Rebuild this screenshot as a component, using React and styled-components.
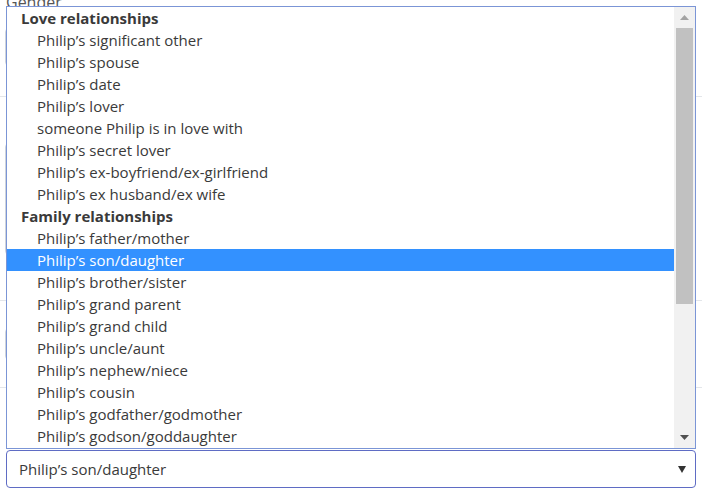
import React from "react";
import styled, { createGlobalStyle } from "styled-components";

const Global = createGlobalStyle`
  html, body { margin: 0; padding: 0; background: #fff; }
  body { font-family: "Open Sans", "Noto Sans", sans-serif; color: #333; }
`;

const Page = styled.div`
  position: relative;
  width: 702px;
  height: 493px;
  overflow: hidden;
  background: #fff;
`;

const Form = styled.div`
  display: flex;
  flex-direction: column;
  height: 100%;
  box-sizing: border-box;
`;

const Label = styled.div`
  font-size: 16px;
  line-height: 16px;
  color: #555;
  margin: -6px 0 0 6px;
  height: 12px;
`;

const Behind = styled.div`
  flex: 1;
  display: flex;
  flex-direction: column;
`;

const Field = styled.div`
  height: ${(p) => p.h}px;
  box-sizing: border-box;
  border-bottom: ${(p) => (p.rule ? "1px solid #e3e6ea" : "none")};
  display: flex;
  align-items: ${(p) => p.align || "center"};
  padding-left: 5px;
`;

const Ghost = styled.div`
  width: 40px;
  height: ${(p) => p.h}px;
  border: 1px solid #cfd4da;
  border-radius: 4px;
  margin-top: ${(p) => p.mt || 0}px;
`;

const Select = styled.div`
  margin: 0 6px 5px 6px;
  height: 38px;
  box-sizing: border-box;
  border: 1px solid #5f6cc4;
  border-radius: 4px;
  display: flex;
  align-items: center;
  justify-content: space-between;
  padding: 0 9px 0 12px;
  font-size: 15px;
  color: #3a3a3a;
`;

const Caret = styled.svg`
  width: 8px;
  height: 7px;
  display: block;
`;

const Popup = styled.div`
  position: absolute;
  left: 6px;
  top: 6px;
  width: 690px;
  height: 443px;
  box-sizing: border-box;
  border: 1px solid #7b95d6;
  background: #fff;
  display: flex;
`;

const List = styled.div`
  flex: 1;
  overflow: hidden;
  display: flex;
  flex-direction: column;
`;

const Row = styled.div`
  height: 22px;
  line-height: 23px;
  font-size: 15px;
  white-space: nowrap;
  padding-left: ${(p) => (p.group ? 14 : 30)}px;
  font-weight: ${(p) => (p.group ? 700 : 400)};
  color: ${(p) => (p.selected ? "#fff" : "#3a3a3a")};
  background: ${(p) => (p.selected ? "#3391ff" : "transparent")};
`;

const Scrollbar = styled.div`
  width: 21px;
  background: #f1f1f1;
  display: flex;
  flex-direction: column;
`;

const ArrowButton = styled.div`
  height: 21px;
  display: flex;
  align-items: center;
  justify-content: center;
`;

const Track = styled.div`
  flex: 1;
  padding: 0 2px;
`;

const Thumb = styled.div`
  height: 276px;
  background: #c1c1c1;
`;

const groups = [
  {
    label: "Love relationships",
    items: [
      "Philip’s significant other",
      "Philip’s spouse",
      "Philip’s date",
      "Philip’s lover",
      "someone Philip is in love with",
      "Philip’s secret lover",
      "Philip’s ex-boyfriend/ex-girlfriend",
      "Philip’s ex husband/ex wife",
    ],
  },
  {
    label: "Family relationships",
    items: [
      "Philip’s father/mother",
      "Philip’s son/daughter",
      "Philip’s brother/sister",
      "Philip’s grand parent",
      "Philip’s grand child",
      "Philip’s uncle/aunt",
      "Philip’s nephew/niece",
      "Philip’s cousin",
      "Philip’s godfather/godmother",
      "Philip’s godson/goddaughter",
    ],
  },
];

const selected = "Philip’s son/daughter";

export default function App() {
  return (
    <Page>
      <Global />
      <Form>
        <Label>Gender</Label>
        <Behind>
          <Field h={91} rule align="flex-start">
            <Ghost h={36} mt={22} />
          </Field>
          <Field h={204} rule>
            <Ghost h={110} />
          </Field>
          <Field h={87} rule>
            <Ghost h={30} />
          </Field>
          <Field h={60} />
        </Behind>
        <Select>
          <span>{selected}</span>
          <Caret viewBox="0 0 8 7">
            <path d="M0 0 H8 L4 7 Z" fill="#333" />
          </Caret>
        </Select>
      </Form>
      <Popup>
        <List>
          {groups.map((g) => (
            <React.Fragment key={g.label}>
              <Row group>{g.label}</Row>
              {g.items.map((it) => (
                <Row key={it} selected={it === selected}>
                  {it}
                </Row>
              ))}
            </React.Fragment>
          ))}
        </List>
        <Scrollbar>
          <ArrowButton>
            <svg width="9" height="5" viewBox="0 0 9 5">
              <path d="M0 5 L4.5 0 L9 5 Z" fill="#a3a3a3" />
            </svg>
          </ArrowButton>
          <Track>
            <Thumb />
          </Track>
          <ArrowButton>
            <svg width="9" height="5" viewBox="0 0 9 5">
              <path d="M0 0 H9 L4.5 5 Z" fill="#505050" />
            </svg>
          </ArrowButton>
        </Scrollbar>
      </Popup>
    </Page>
  );
}
